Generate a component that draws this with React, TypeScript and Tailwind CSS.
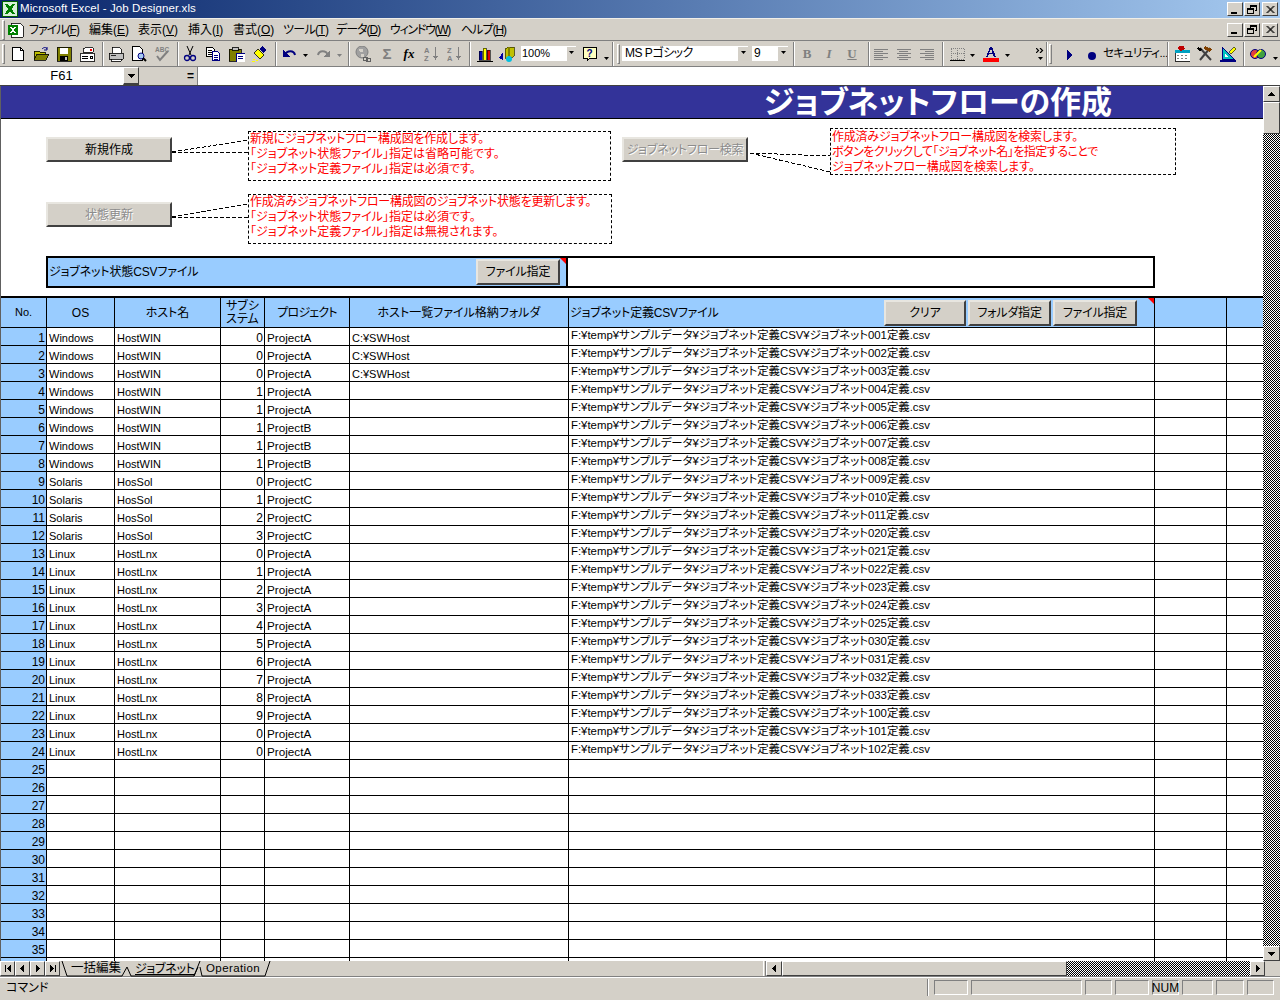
import React from "react";

const rowData = [
  ["Windows", "HostWIN", 0, "ProjectA", "C:¥SWHost", "001"],
  ["Windows", "HostWIN", 0, "ProjectA", "C:¥SWHost", "002"],
  ["Windows", "HostWIN", 0, "ProjectA", "C:¥SWHost", "003"],
  ["Windows", "HostWIN", 1, "ProjectA", "", "004"],
  ["Windows", "HostWIN", 1, "ProjectA", "", "005"],
  ["Windows", "HostWIN", 1, "ProjectB", "", "006"],
  ["Windows", "HostWIN", 1, "ProjectB", "", "007"],
  ["Windows", "HostWIN", 1, "ProjectB", "", "008"],
  ["Solaris", "HosSol", 0, "ProjectC", "", "009"],
  ["Solaris", "HosSol", 1, "ProjectC", "", "010"],
  ["Solaris", "HosSol", 2, "ProjectC", "", "011"],
  ["Solaris", "HosSol", 3, "ProjectC", "", "020"],
  ["Linux", "HostLnx", 0, "ProjectA", "", "021"],
  ["Linux", "HostLnx", 1, "ProjectA", "", "022"],
  ["Linux", "HostLnx", 2, "ProjectA", "", "023"],
  ["Linux", "HostLnx", 3, "ProjectA", "", "024"],
  ["Linux", "HostLnx", 4, "ProjectA", "", "025"],
  ["Linux", "HostLnx", 5, "ProjectA", "", "030"],
  ["Linux", "HostLnx", 6, "ProjectA", "", "031"],
  ["Linux", "HostLnx", 7, "ProjectA", "", "032"],
  ["Linux", "HostLnx", 8, "ProjectA", "", "033"],
  ["Linux", "HostLnx", 9, "ProjectA", "", "100"],
  ["Linux", "HostLnx", 0, "ProjectA", "", "101"],
  ["Linux", "HostLnx", 0, "ProjectA", "", "102"],
];

const cols = "grid grid-cols-[46px_68px_106px_44px_85px_219px_586px_72px_36px]";
const cell = "border-r border-black flex items-end overflow-hidden whitespace-nowrap leading-[14px]";
const hcell = "border-r border-black flex items-center justify-center overflow-hidden whitespace-nowrap";

const Ico = ({ className = "", children }: { className?: string; children?: React.ReactNode }) => (
  <svg viewBox="0 0 16 16" width="16" height="16" shapeRendering="crispEdges" className={`shrink-0 ${className}`}>
    {children}
  </svg>
);

const Dd = ({ className = "", grey = false }: { className?: string; grey?: boolean }) => (
  <svg viewBox="0 0 5 3" width="5" height="3" className={`shrink-0 mt-[4px] ${className}`}>
    <path d="M0 0h5L2.500 3z" fill={grey ? "#808080" : "#000"} />
  </svg>
);

const Sep = ({ className = "" }: { className?: string }) => (
  <div className={`w-[2px] h-[24px] shrink-0 border-l border-l-[#808080] border-r border-r-white ${className}`} />
);

const Grip = ({ className = "" }: { className?: string }) => (
  <div className={`w-[3px] h-[20px] shrink-0 border border-t-white border-l-white border-r-[#808080] border-b-[#808080] ${className}`} />
);

const WinBtn = ({ kind }: { kind: "min" | "max" | "close" }) => (
  <div className="w-[16px] h-[14px] bg-[#d4d0c8] border border-t-white border-l-white border-r-[#404040] border-b-[#404040] flex items-center justify-center">
    <svg viewBox="0 0 10 9" width="10" height="9" shapeRendering="crispEdges" fill="none" stroke="#000">
      {kind === "min" && <path d="M1 7.500h6M1 8.500h6" />}
      {kind === "max" && <path d="M3 2.500V.5h6v5H7.500M3 1.500h6M.5 3.500h6v5h-6zM.5 4.500h6" />}
      {kind === "close" && <path d="M1.500 1l7 7M2.500 1l7 7M8.500 1l-7 7M9.500 1l-7 7" shapeRendering="auto" strokeWidth="0.9" />}
    </svg>
  </div>
);

const Mn = ({ w, label, k, className = "" }: { w: string; label: string; k: string; className?: string }) => (
  <div className={`${w} ${className} shrink-0 whitespace-nowrap`}>
    {label}(<span className="underline">{k}</span>)
  </div>
);

const SheetBtn = ({ label, disabled = false, className = "" }: { label: string; disabled?: boolean; className?: string }) => (
  <div
    className={`bg-[#d4d0c8] box-border border-2 border-t-[#e8e6e0] border-l-[#e8e6e0] border-r-[#404040] border-b-[#404040] flex items-center justify-center whitespace-nowrap ${
      disabled ? "text-[#8c8c8c] [text-shadow:1px_1px_0_#fff]" : "text-black"
    } ${className}`}
  >
    {label}
  </div>
);

const Note = ({ children, className = "" }: { children: React.ReactNode; className?: string }) => (
  <div className={`absolute box-border border border-dashed border-black bg-white text-[#ff0000] leading-[15px] pl-px whitespace-nowrap ${className}`}>
    {children}
  </div>
);

const RedTick = ({ className = "" }: { className?: string }) => (
  <div className={`absolute w-0 h-0 border-l-[6px] border-l-transparent border-t-[6px] border-t-[#ff0000] ${className}`} />
);

const Arrow = ({ d }: { d: string }) => (
  <svg viewBox="0 0 9 9" width="9" height="9" shapeRendering="crispEdges">
    <path d={d} fill="#000" />
  </svg>
);

const ScrollBtn = ({ d, className = "" }: { d: string; className?: string }) => (
  <div className={`bg-[#d4d0c8] box-border border border-t-white border-l-white border-r-[#404040] border-b-[#404040] flex items-center justify-center shrink-0 ${className}`}>
    <Arrow d={d} />
  </div>
);

const AlignIco = ({ className = "", kind }: { className?: string; kind: "l" | "c" | "r" }) => {
  const x = (w: number) => (kind === "l" ? 1 : kind === "c" ? (16 - w) / 2 : 15 - w);
  return (
    <Ico className={className}>
      {[[3, 14], [5, 9], [7, 14], [9, 9], [11, 14], [13, 9]].map(([y, w]) => (
        <rect key={y} x={Math.floor(x(w))} y={y} width={w} height="1" fill="#808080" />
      ))}
    </Ico>
  );
};

const SortIco = ({ className = "", a, b }: { className?: string; a: string; b: string }) => (
  <Ico className={className}>
    <text x="0" y="7" fontSize="7.500" fontWeight="700" fill="#808080" fontFamily="Liberation Sans">{a}</text>
    <text x="0" y="15" fontSize="7.500" fontWeight="700" fill="#808080" fontFamily="Liberation Sans">{b}</text>
    <path d="M11 1h1v10h-1zM9 10h5l-2.500 4z" fill="#808080" />
  </Ico>
);

const StatusBox = ({ w, label = "" }: { w: string; label?: string }) => (
  <div className={`${w} h-[15px] box-border border border-t-[#808080] border-l-[#808080] border-r-white border-b-white flex items-center justify-center shrink-0 leading-none`}>
    {label}
  </div>
);

export default function App() {
  return (
    <div className="w-[1280px] h-[1000px] overflow-hidden bg-[#d4d0c8] flex flex-col text-[12px] text-black font-['Liberation_Sans','Noto_Sans_CJK_JP',sans-serif] [font-feature-settings:'palt']">
      {/* title bar */}
      <div className="h-[19px] shrink-0 border-b border-b-[#f0eee8] bg-gradient-to-r from-[#0a246a] to-[#a6caf0] flex items-center pl-[2px] pr-[2px] text-white">
        <svg viewBox="0 0 16 16" width="16" height="16" shapeRendering="crispEdges" className="shrink-0">
          <rect x="0.5" y="0.5" width="15" height="15" fill="#d8f0d8" stroke="#006000" />
          <path d="M3 3h3l2 3 2-3h3l-3 5 3 5h-3l-2-3-2 3H3l3-5z" fill="#008000" />
        </svg>
        <span className="ml-[2px] text-[11.5px] tracking-[0.1px] whitespace-nowrap">Microsoft Excel - Job Designer.xls</span>
        <div className="ml-auto flex">
          <WinBtn kind="min" />
          <div className="w-px" />
          <WinBtn kind="max" />
          <div className="w-[2px]" />
          <WinBtn kind="close" />
        </div>
      </div>

      {/* menu bar */}
      <div className="h-[22px] shrink-0 border-b border-b-[#808080] flex items-center pr-[2px]">
        <Grip className="ml-[2px]" />
        <svg viewBox="0 0 16 16" width="16" height="16" shapeRendering="crispEdges" className="ml-[3px] shrink-0">
          <path d="M3 1h9l3 3v11H3z" fill="#fff" stroke="#000" strokeWidth="0.8" />
          <rect x="0" y="3" width="10" height="10" fill="#008000" />
          <path d="M2 5h2l1 2 1-2h2l-2 3 2 3H6L5 9l-1 2H2l2-3z" fill="#fff" />
        </svg>
        <Mn w="w-[60px]" label="ファイル" k="F" className="ml-[5px] tracking-[-1px]" />
        <Mn w="w-[49px]" label="編集" k="E" />
        <Mn w="w-[50px]" label="表示" k="V" />
        <Mn w="w-[45px]" label="挿入" k="I" />
        <Mn w="w-[50px]" label="書式" k="O" />
        <Mn w="w-[53px]" label="ツール" k="T" className="tracking-[-0.7px]" />
        <Mn w="w-[54px]" label="データ" k="D" className="tracking-[-1px]" />
        <Mn w="w-[71px]" label="ウィンドウ" k="W" className="tracking-[-1.3px]" />
        <Mn w="w-[50px]" label="ヘルプ" k="H" className="tracking-[-1px]" />
        <div className="ml-auto flex">
          <WinBtn kind="min" />
          <div className="w-px" />
          <WinBtn kind="max" />
          <div className="w-[2px]" />
          <WinBtn kind="close" />
        </div>
      </div>

      {/* toolbar */}
      <div className="h-[26px] shrink-0 border-b border-b-[#808080] flex items-center overflow-hidden">
        <Grip className="ml-[2px]" />
        <Ico className="ml-[5px]">
          <path d="M2.500 1.500h8l3 3v10h-11z" fill="#fff" stroke="#000" />
          <path d="M10.500 1.500v3h3" fill="none" stroke="#000" />
        </Ico>
        <Ico className="ml-[7px]">
          <path d="M1 5h5l1 1h5v2H5L1 14z" fill="#c0c000" stroke="#000" strokeWidth="0.8" />
          <path d="M4 8h12l-3 6H1z" fill="#808000" stroke="#000" strokeWidth="0.8" />
          <path d="M9 3c2-2 4-2 5 0M14 1v3h-3" fill="none" stroke="#000080" shapeRendering="auto" />
        </Ico>
        <Ico className="ml-[7px]">
          <rect x="1" y="1" width="14" height="14" fill="#808000" stroke="#000" strokeWidth="0.8" />
          <rect x="4" y="2" width="8" height="6" fill="#fff" />
          <rect x="4" y="10" width="8" height="5" fill="#000" />
          <rect x="9" y="11" width="2" height="3" fill="#c0c0c0" />
        </Ico>
        <Ico className="ml-[7px]">
          <path d="M4 6V3l4-2h5l1 1v4z" fill="#fff" stroke="#000" strokeWidth="0.8" />
          <rect x="11" y="3" width="2" height="2" fill="#f00" />
          <rect x="1" y="7" width="14" height="8" fill="#fff" stroke="#000" strokeWidth="0.8" />
          <path d="M3 10h6M3 12h6M11 10h2v2h-2z" stroke="#000" fill="none" />
        </Ico>
        <Sep className="ml-[7px]" />
        <Ico className="ml-[4px]">
          <path d="M4 7V1h7l2 2v4z" fill="#fff" stroke="#000" strokeWidth="0.8" />
          <path d="M1 7h14v6H1z" fill="#c0c0c0" stroke="#000" strokeWidth="0.8" />
          <path d="M3 13v2h10v-2zM3 9h5" fill="#fff" stroke="#000" strokeWidth="0.8" />
        </Ico>
        <Ico className="ml-[7px]">
          <path d="M1.500 .5h7l3 3v11h-10z" fill="#fff" stroke="#000" />
          <circle cx="10" cy="10" r="3" fill="#a6caf0" stroke="#000080" shapeRendering="auto" />
          <path d="M12 12l3 3" stroke="#000" strokeWidth="2" shapeRendering="auto" />
        </Ico>
        <Ico className="ml-[7px]">
          <text x="1" y="6" fontSize="6.500" fontWeight="700" fill="#808080" fontFamily="Liberation Sans">ABC</text>
          <path d="M3 10l3 4 8-9" fill="none" stroke="#808080" strokeWidth="2" shapeRendering="auto" />
        </Ico>
        <Sep className="ml-[7px]" />
        <Ico className="ml-[3px]">
          <path d="M5 0l4 9M11 0L7 9" stroke="#000" fill="none" shapeRendering="auto" />
          <circle cx="5" cy="12" r="2.500" fill="none" stroke="#000080" strokeWidth="1.300" shapeRendering="auto" />
          <circle cx="11" cy="12" r="2.500" fill="none" stroke="#000080" strokeWidth="1.300" shapeRendering="auto" />
        </Ico>
        <Ico className="ml-[7px]">
          <path d="M1.500 1.500h6l2 2v7h-8z" fill="#fff" stroke="#000" />
          <path d="M3 4h4M3 6h4M3 8h4" stroke="#000" />
          <path d="M7.500 5.500h5l2 2v7h-7z" fill="#fff" stroke="#000080" />
          <path d="M9 9h4M9 11h4M9 13h4" stroke="#000080" />
        </Ico>
        <Ico className="ml-[8px]">
          <rect x="0" y="3" width="12" height="12" fill="#808000" stroke="#000" strokeWidth="0.8" />
          <rect x="3" y="1" width="6" height="3" fill="#c0c0c0" stroke="#000" strokeWidth="0.8" />
          <rect x="7" y="7" width="9" height="9" fill="#fff" stroke="#000080" />
          <path d="M9 10h5M9 12h5" stroke="#000080" />
        </Ico>
        <Ico className="ml-[7px]">
          <path d="M10 0l4 4-3 3-4-4z" fill="#000080" />
          <path d="M6 3l6 6-4 4-6-6z" fill="#ffff00" stroke="#000" strokeWidth="0.8" />
          <path d="M1 13h2M4 14h2M0 15h3" stroke="#ffff00" />
        </Ico>
        <Sep className="ml-[7px]" />
        <Ico className="ml-[5px]">
          <path d="M3 9c2-5 9-5 10 0" fill="none" stroke="#000080" strokeWidth="2" shapeRendering="auto" />
          <path d="M1 4v7h7z" fill="#000080" />
        </Ico>
        <Dd className="ml-[5px]" />
        <Ico className="ml-[7px]">
          <path d="M3 9c1-5 8-5 10 0" fill="none" stroke="#808080" strokeWidth="2" shapeRendering="auto" />
          <path d="M15 4v7H8z" fill="#808080" />
        </Ico>
        <Dd className="ml-[6px]" grey />
        <Sep className="ml-[6px]" />
        <Ico className="ml-[5px]">
          <circle cx="7" cy="6" r="6" fill="#a0a0a0" stroke="#808080" shapeRendering="auto" />
          <path d="M4 3h4v3H5zM6 8h3v3H6z" fill="#d4d0c8" />
          <rect x="8" y="11" width="4" height="3" fill="none" stroke="#606060" />
          <rect x="11" y="12" width="4" height="3" fill="none" stroke="#606060" />
        </Ico>
        <div className="ml-[8px] w-[16px] text-center text-[15px] leading-none text-[#808080] font-bold">Σ</div>
        <div className="ml-[6px] w-[16px] text-center text-[13px] leading-none font-bold italic font-['Liberation_Serif',serif]">fx</div>
        <SortIco className="ml-[7px]" a="A" b="Z" />
        <SortIco className="ml-[7px]" a="Z" b="A" />
        <Sep className="ml-[6px]" />
        <Ico className="ml-[6px]">
          <rect x="2" y="5" width="3" height="9" fill="#0000c0" stroke="#000" strokeWidth="0.6" />
          <rect x="6" y="2" width="3" height="12" fill="#ffff00" stroke="#000" strokeWidth="0.6" />
          <rect x="10" y="4" width="3" height="10" fill="#e00000" stroke="#000" strokeWidth="0.6" />
          <path d="M0 15h16" stroke="#000" />
        </Ico>
        <Ico className="ml-[6px]">
          <path d="M6 3l3-2h6v9l-3 2H6z" fill="#c0c000" stroke="#404000" strokeWidth="0.8" />
          <path d="M9 1h2v10H9z" fill="#808000" />
          <path d="M0 12l4-6v8z" fill="#0000a0" />
          <circle cx="10" cy="13" r="3" fill="#00c0e0" shapeRendering="auto" />
        </Ico>
        <div className="ml-[6px] w-[55px] h-[15px] bg-white flex justify-between shrink-0">
          <span className="leading-[14px] text-[11px] pl-px">100%</span>
          <div className="w-[9px] bg-[#d4d0c8] flex items-start justify-center mt-px"><Dd /></div>
        </div>
        <Ico className="ml-[6px]">
          <path d="M1 1h13v11H8l-3 3v-3H1z" fill="#ffffc0" stroke="#000" strokeWidth="1" />
          <text x="4.500" y="10.500" fontSize="10" fontWeight="700" fill="#000080" fontFamily="Liberation Sans">?</text>
        </Ico>
        <Dd className="ml-[6px] mt-[10px]" />
        <Sep className="ml-[3px]" />
        <Grip className="ml-[3px]" />
        <div className="ml-[2px] w-[126px] h-[15px] bg-white flex justify-between shrink-0">
          <span className="leading-[14px] pl-[3px] whitespace-nowrap tracking-[-0.5px]">MS Pゴシック</span>
          <div className="w-[10px] bg-[#d4d0c8] flex items-start justify-center mt-px"><Dd /></div>
        </div>
        <div className="ml-[4px] w-[36px] h-[15px] bg-white flex justify-between shrink-0">
          <span className="leading-[14px] pl-[2px]">9</span>
          <div className="w-[10px] bg-[#d4d0c8] flex items-start justify-center mt-px"><Dd /></div>
        </div>
        <Sep className="ml-[5px]" />
        <div className="ml-[4px] w-[16px] text-center text-[13px] font-bold leading-none text-[#808080] font-['Liberation_Serif',serif]">B</div>
        <div className="ml-[6px] w-[16px] text-center text-[13px] font-bold italic leading-none text-[#808080] font-['Liberation_Serif',serif]">I</div>
        <div className="ml-[7px] w-[16px] text-center text-[13px] font-bold underline leading-none text-[#808080] font-['Liberation_Serif',serif]">U</div>
        <Sep className="ml-[8px]" />
        <AlignIco className="ml-[3px]" kind="l" />
        <AlignIco className="ml-[7px]" kind="c" />
        <AlignIco className="ml-[7px]" kind="r" />
        <Sep className="ml-[7px]" />
        <Ico className="ml-[6px]">
          <path d="M1 2h13v11H1zM7 2v11M1 7h13" fill="none" stroke="#808080" strokeDasharray="1 1" />
          <path d="M0 14h15" stroke="#000" />
        </Ico>
        <Dd className="ml-[4px]" />
        <Ico className="ml-[8px]">
          <path d="M3 11L7 1h2l4 10h-2l-1-3H6l-1 3zM6.500 6.500h3L8 3z" fill="#000080" fillRule="evenodd" />
          <rect x="0" y="12" width="16" height="4" fill="#ff0000" />
        </Ico>
        <Dd className="ml-[6px]" />
        <div className="ml-[26px] w-[8px] flex flex-col items-center shrink-0">
          <svg viewBox="0 0 8 5" width="8" height="5"><path d="M0 0l2.500 2.500L0 5M4 0l2.500 2.500L4 5" fill="none" stroke="#000" strokeWidth="1.200" /></svg>
          <Dd className="mt-[3px]" />
        </div>
        <Sep className="ml-[2px]" />
        <Grip className="ml-px" />
        <Ico className="ml-[10px]"><path d="M5 4l6 5-6 5z" fill="#000080" /></Ico>
        <Ico className="ml-[6px]"><circle cx="8" cy="10" r="4" fill="#000080" shapeRendering="auto" /></Ico>
        <div className="ml-[3px] w-[60px] whitespace-nowrap text-[11.5px] tracking-[-0.5px]">セキュリティ...</div>
        <Sep className="ml-[4px]" />
        <Ico className="ml-[5px]">
          <rect x="1" y="4" width="15" height="11" fill="#fff" stroke="#000" strokeWidth="0.8" />
          <rect x="1" y="4" width="15" height="3" fill="#00a0c0" />
          <path d="M3 9h2M7 9h2M11 9h2M3 12h2M7 12h2M11 12h2" stroke="#808080" />
          <path d="M5 0h5l1 3-4 2-3-2z" fill="#c00000" />
        </Ico>
        <Ico className="ml-[7px]">
          <path d="M3 2l11 12M13 2L3 14" stroke="#404040" strokeWidth="2" shapeRendering="auto" />
          <path d="M8 0l7 3-2 3-6-3z" fill="#804000" />
          <path d="M1 1l4 2-2 3-3-3z" fill="#000" />
        </Ico>
        <Ico className="ml-[7px]">
          <path d="M2 1v12h12z" fill="#00c0c0" stroke="#000080" />
          <path d="M5 8v3h3z" fill="#fff" />
          <path d="M9 6l5-5 2 2-5 5z" fill="#ffff00" stroke="#000" strokeWidth="0.6" />
          <path d="M0 14h16v2H0z" fill="#000080" />
        </Ico>
        <Sep className="ml-[7px]" />
        <Ico className="ml-[5px]">
          <circle cx="5" cy="8" r="4.500" fill="#e04040" stroke="#000080" shapeRendering="auto" />
          <circle cx="11" cy="8" r="4.500" fill="#40a040" stroke="#000080" shapeRendering="auto" />
          <path d="M4 11l7-7" stroke="#ffff00" strokeWidth="2" shapeRendering="auto" />
        </Ico>
        <Dd className="ml-[7px] mt-[10px]" />
      </div>

      {/* formula bar */}
      <div className="h-[18px] shrink-0 flex items-stretch bg-white">
        <div className="w-[123px] shrink-0 text-center leading-[18px] text-[13px]">F61</div>
        <ScrollBtn d="M1 3h7L4.500 7z" className="w-[16px] border-b-2" />
        <div className="w-[59px] shrink-0 bg-[#d4d0c8] border-r border-[#808080] flex items-center justify-end pr-[3px] font-bold">=</div>
      </div>

      {/* sheet and vertical scrollbar */}
      <div className="h-[876px] shrink-0 flex border-t border-t-[#404040] bg-white overflow-hidden">
        <div className="w-[1263px] shrink-0 flex flex-col overflow-hidden border-l border-l-[#606060]">
          <div className="h-[33px] shrink-0 bg-[#333399] border-b border-black flex items-center justify-end pr-[151px] pt-px text-white text-[31px] font-bold whitespace-nowrap leading-none">
            ジョブネットフローの作成
          </div>

          {/* floating buttons and notes over the sheet */}
          <div className="relative h-[177px] shrink-0 bg-white">
            <SheetBtn label="新規作成" className="absolute left-[45px] top-[18px] w-[126px] h-[25px]" />
            <SheetBtn label="状態更新" disabled className="absolute left-[45px] top-[83px] w-[126px] h-[25px]" />
            <SheetBtn label="ジョブネットフロー検索" disabled className="absolute left-[621px] top-[18px] w-[126px] h-[25px] tracking-[-0.2px]" />
            <svg className="absolute -left-px top-0" width="1263" height="177" fill="none" stroke="#000" strokeDasharray="4 2" shapeRendering="crispEdges">
              <path d="M172 33L248 21M172 33H248" />
              <path d="M172 98L248 85M172 98H248" />
              <path d="M750 34L830 37M750 34L830 53" />
            </svg>
            <Note className="left-[247px] top-[12px] w-[363px] h-[50px]">
              <div className="tracking-[-0.2px]">新規にジョブネットフロー構成図を作成します。</div>
              <div>「ジョブネット状態ファイル」指定は省略可能です。</div>
              <div>「ジョブネット定義ファイル」指定は必須です。</div>
            </Note>
            <Note className="left-[247px] top-[75px] w-[364px] h-[50px]">
              <div className="tracking-[-0.2px]">作成済みジョブネットフロー構成図のジョブネット状態を更新します。</div>
              <div>「ジョブネット状態ファイル」指定は必須です。</div>
              <div>「ジョブネット定義ファイル」指定は無視されます。</div>
            </Note>
            <Note className="left-[829px] top-[9px] w-[346px] h-[47px] pt-px">
              <div className="tracking-[-0.2px]">作成済みジョブネットフロー構成図を検索します。</div>
              <div className="tracking-[-0.5px]">ボタンをクリックして「ジョブネット名」を指定することで</div>
              <div>ジョブネットフロー構成図を検索します。</div>
            </Note>
            <div className="absolute left-[45px] top-[137px] w-[1109px] h-[32px] box-border border-2 border-black flex">
              <div className="relative w-[520px] shrink-0 bg-[#99ccff] border-r-2 border-black flex items-center whitespace-nowrap pl-px tracking-[-0.15px]">
                ジョブネット状態CSVファイル
                <SheetBtn label="ファイル指定" className="absolute left-[428px] top-px w-[84px] h-[26px]" />
                <RedTick className="right-0 top-0" />
              </div>
            </div>
          </div>

          {/* table */}
          <div className={`${cols} h-[32px] shrink-0 bg-[#99ccff] border-t-2 border-b border-black text-center`}>
            <div className={`${hcell} text-[11px]`}>No.</div>
            <div className={hcell}>OS</div>
            <div className={hcell}>ホスト名</div>
            <div className={`${hcell} leading-[13px] whitespace-normal`}>サブシ<br />ステム</div>
            <div className={`${hcell} tracking-[-0.8px]`}>プロジェクト</div>
            <div className={hcell}>ホスト一覧ファイル格納フォルダ</div>
            <div className={`${hcell} !justify-start relative pl-px tracking-[-0.2px]`}>
              ジョブネット定義CSVファイル
              <SheetBtn label="クリア" className="absolute left-[315px] top-[2px] w-[82px] h-[26px]" />
              <SheetBtn label="フォルダ指定" className="absolute left-[399px] top-[2px] w-[83px] h-[26px]" />
              <SheetBtn label="ファイル指定" className="absolute left-[484px] top-[2px] w-[84px] h-[26px]" />
              <RedTick className="right-0 top-0" />
            </div>
            <div className="border-r border-black" />
            <div />
          </div>
          <div className="flex-1 overflow-hidden">
            {Array.from({ length: 36 }, (_, i) => {
              const r = rowData[i];
              return (
                <div key={i} className={`${cols} h-[18px] border-b border-black`}>
                  <div className={`${cell} justify-end pr-px bg-[#99ccff]`}>{i < 35 ? i + 1 : ""}</div>
                  <div className={`${cell} pl-[2px] text-[11px]`}>{r ? r[0] : ""}</div>
                  <div className={`${cell} pl-[2px] text-[11px]`}>{r ? r[1] : ""}</div>
                  <div className={`${cell} justify-end pr-px`}>{r ? r[2] : ""}</div>
                  <div className={`${cell} pl-[2px] text-[11.7px]`}>{r ? r[3] : ""}</div>
                  <div className={`${cell} pl-[2px] text-[11px]`}>{r ? r[4] : ""}</div>
                  <div className={`${cell} pl-[2px] !items-start !leading-[15px] text-[11.4px]`}>
                    {r ? `F:¥temp¥サンプルデータ¥ジョブネット定義CSV¥ジョブネット${r[5]}定義.csv` : ""}
                  </div>
                  <div className="border-r border-black" />
                  <div />
                </div>
              );
            })}
          </div>
        </div>

        <div className="w-[17px] shrink-0 flex flex-col">
          <ScrollBtn d="M1 6h7L4.500 2z" className="h-[16px]" />
          <div className="h-[32px] shrink-0 bg-[#d4d0c8] box-border border border-t-white border-l-white border-r-[#404040] border-b-[#404040]" />
          <div className="flex-1 bg-[repeating-conic-gradient(#000_0_25%,#fff_0_50%)] bg-[length:2px_2px]" />
          <ScrollBtn d="M1 3h7L4.500 7z" className="h-[15px]" />
        </div>
      </div>

      {/* sheet tabs and horizontal scrollbar */}
      <div className="h-[16px] shrink-0 flex items-stretch border-b border-b-[#808080]">
        {["M2 1h1v7H2zM8 1v7L4 4.500z", "M6 1v7L2 4.500z", "M3 1v7l4-3.500z", "M2 1v7l4-3.500zM7 1h1v7H7z"].map((d) => (
          <ScrollBtn key={d} d={d} className="w-[15px]" />
        ))}
        <div className="relative w-[703px] shrink-0 flex items-center pl-[11px]">
          <svg className="absolute left-0 top-0" width="215" height="16" fill="none" stroke="#000">
            <path d="M2 0L7 15H62L67 6M67 6L71 15H134L140 0M134 15L138 6M140 6L142 15H205L210 0" />
          </svg>
          <span className="relative w-[64px] whitespace-nowrap text-[12.5px]">一括編集</span>
          <span className="relative w-[71px] underline whitespace-nowrap tracking-[-0.3px]">ジョブネット</span>
          <span className="relative whitespace-nowrap text-[11.5px] tracking-[0.4px]">Operation</span>
        </div>
        <div className="w-[3px] shrink-0 border-x border-x-[#808080] border-l-white" />
        <ScrollBtn d="M6 1v7L2 4.500z" className="w-[16px]" />
        <div className="w-[285px] shrink-0 bg-[#d4d0c8] box-border border border-t-white border-l-white border-r-[#404040] border-b-[#404040]" />
        <div className="w-[183px] shrink-0 bg-[repeating-conic-gradient(#000_0_25%,#fff_0_50%)] bg-[length:2px_2px]" />
        <ScrollBtn d="M3 1v7l4-3.500z" className="w-[15px]" />
      </div>

      {/* status bar */}
      <div className="h-[20px] shrink-0 border-t border-t-white flex items-center pl-[6px]">
        <span className="w-[921px] shrink-0">コマンド</span>
        <div className="w-[2px] h-[17px] border-l border-l-[#808080] border-r border-r-white shrink-0" />
        <div className="ml-[5px] flex gap-[3px]">
          <StatusBox w="w-[34px]" />
          <StatusBox w="w-[111px]" />
          <StatusBox w="w-[27px]" />
          <StatusBox w="w-[34px]" />
          <StatusBox w="w-[27px]" label="NUM" />
          <StatusBox w="w-[31px]" />
          <StatusBox w="w-[28px]" />
          <StatusBox w="w-[27px]" />
        </div>
      </div>
    </div>
  );
}
